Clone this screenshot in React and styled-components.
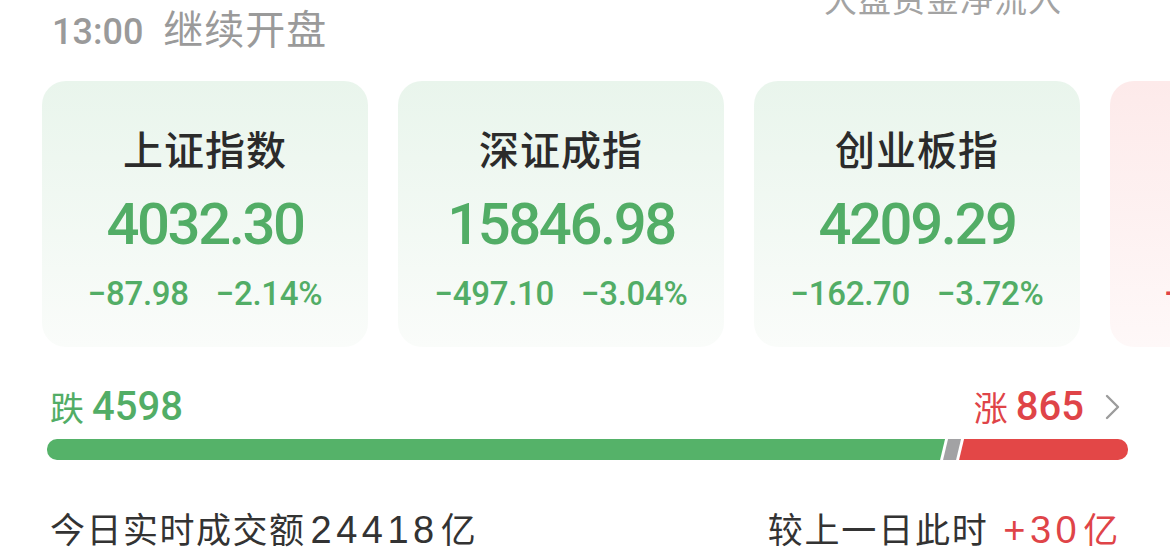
import React from 'react'
import styled, { createGlobalStyle } from 'styled-components'

const GlobalStyle = createGlobalStyle`
  html, body {
    margin: 0;
    padding: 0;
    background: #ffffff;
    overflow: hidden;
  }
  body {
    font-family: 'Noto Sans CJK SC', 'Noto Sans', sans-serif;
  }
`

const GREEN = '#52ad66'
const RED = '#df4448'

const indices = [
  { name: '上证指数', value: '4032.30', change: '-87.98', pct: '-2.14%', up: false },
  { name: '深证成指', value: '15846.98', change: '-497.10', pct: '-3.04%', up: false },
  { name: '创业板指', value: '4209.29', change: '-162.70', pct: '-3.72%', up: false },
  { name: '北证50', value: '1436.52', change: '+8.26', pct: '+1.29%', up: true },
]

// minus signs are drawn as a real minus so they line up with the plus
const sign = (s) => s.replace('-', '−')

function Chevron() {
  return (
    <svg width="18" height="26" viewBox="0 0 18 26" fill="none">
      <path d="M3 2 L14 13 L3 24" stroke="#9c9c9c" strokeWidth="2.4" strokeLinecap="round" strokeLinejoin="round" />
    </svg>
  )
}

function App() {
  const fall = 4598
  const rise = 865

  return (
    <Page>
      <GlobalStyle />
      <Header>
        <Status>
          <Clock>13:00</Clock>继续开盘
        </Status>
        <FlowTitle>大盘资金净流入</FlowTitle>
      </Header>

      <CardRow>
        {indices.map((item) => (
          <IndexCard key={item.name} $up={item.up}>
            <IndexName>{item.name}</IndexName>
            <IndexValue $up={item.up}>{item.value}</IndexValue>
            <IndexChange $up={item.up}>
              <span>{sign(item.change)}</span>
              <span>{sign(item.pct)}</span>
            </IndexChange>
          </IndexCard>
        ))}
      </CardRow>

      <Breadth>
        <BreadthLabels>
          <Count $color={GREEN}>
            <CountWord>跌</CountWord>
            <CountNum>{fall}</CountNum>
          </Count>
          <Count $color={RED}>
            <CountWord>涨</CountWord>
            <CountNum>{rise}</CountNum>
            <More><Chevron /></More>
          </Count>
        </BreadthLabels>
        <Bar>
          <FallPart style={{ flexGrow: fall }} />
          <FlatPart />
          <RisePart style={{ flexGrow: rise }} />
        </Bar>
      </Breadth>

      <Turnover>
        <TurnoverText>
          今日实时成交额<Digits>24418</Digits>亿
        </TurnoverText>
        <TurnoverText $wide>
          较上一日此时 <Delta><Digits>+30</Digits>亿</Delta>
        </TurnoverText>
      </Turnover>
    </Page>
  )
}

const Page = styled.div`
  width: 1170px;
  height: 553px;
  box-sizing: border-box;
  padding: 0 42px;
  overflow: hidden;
`

const Header = styled.div`
  height: 81px;
  display: flex;
  justify-content: space-between;
  align-items: flex-start;
`

const Status = styled.div`
  margin-left: 10px;
  line-height: 54px;
  font-size: 40px;
  color: #9a9a9a;
  letter-spacing: 1px;
  white-space: nowrap;
`

const Clock = styled.span`
  font-family: 'Roboto', sans-serif;
  font-weight: 500;
  font-size: 36px;
  letter-spacing: 0;
  margin-right: 20px;
`

const FlowTitle = styled.div`
  margin-top: -22px;
  margin-right: 66px;
  line-height: 40px;
  font-size: 33px;
  color: #a3a3a3;
  letter-spacing: 1px;
  white-space: nowrap;
`

const CardRow = styled.div`
  display: flex;
  gap: 30px;
`

const IndexCard = styled.div`
  flex: 0 0 326px;
  height: 266px;
  box-sizing: border-box;
  border-radius: 24px;
  padding-top: 42px;
  display: flex;
  flex-direction: column;
  align-items: center;
  white-space: nowrap;
  background: ${(p) =>
    p.$up
      ? 'linear-gradient(180deg, #fdeaea 0%, #fef8f8 100%)'
      : 'linear-gradient(180deg, #e9f5ec 0%, #fafcfa 100%)'};
`

const IndexName = styled.div`
  line-height: 50px;
  font-size: 40px;
  font-weight: 500;
  color: #2b2b2b;
  letter-spacing: 1px;
`

const IndexValue = styled.div`
  margin-top: 16px;
  line-height: 70px;
  font-family: 'Roboto', sans-serif;
  font-size: 58px;
  font-weight: 500;
  letter-spacing: -2.4px;
  color: ${(p) => (p.$up ? RED : GREEN)};
`

const IndexChange = styled.div`
  margin-top: 15px;
  line-height: 40px;
  display: flex;
  gap: 27px;
  font-family: 'Roboto', sans-serif;
  font-size: 33px;
  font-weight: 500;
  letter-spacing: -0.3px;
  color: ${(p) => (p.$up ? RED : GREEN)};
`

const Breadth = styled.div`
  margin-top: 38px;
  padding: 0 0 0 5px;
`

const BreadthLabels = styled.div`
  display: flex;
  justify-content: space-between;
  align-items: center;
  height: 44px;
  padding: 0 6px 0 3px;
`

const Count = styled.div`
  display: flex;
  align-items: center;
  color: ${(p) => p.$color};
`

const CountWord = styled.span`
  font-size: 34px;
  line-height: 44px;
  margin-right: 8px;
`

const CountNum = styled.span`
  font-family: 'Roboto', sans-serif;
  font-size: 40px;
  font-weight: 500;
  line-height: 44px;
`

const More = styled.span`
  display: flex;
  margin-left: 20px;
`

const Bar = styled.div`
  margin-top: 10px;
  height: 21px;
  display: flex;
`

const FallPart = styled.div`
  flex-basis: 0;
  background: #55b269;
  border-radius: 10px 0 0 10px;
  clip-path: polygon(0 0, 100% 0, calc(100% - 5px) 100%, 0 100%);
`

const FlatPart = styled.div`
  flex: 0 0 18px;
  margin: 0 -2px;
  background: #a2a2a4;
  clip-path: polygon(5px 0, 100% 0, calc(100% - 5px) 100%, 0 100%);
`

const RisePart = styled.div`
  flex-basis: 0;
  background: #e34747;
  border-radius: 0 10px 10px 0;
  clip-path: polygon(5px 0, 100% 0, 100% 100%, 0 100%);
`

const Turnover = styled.div`
  margin-top: 46px;
  display: flex;
  justify-content: space-between;
  align-items: baseline;
  padding: 0 8px 0 8px;
`

const TurnoverText = styled.div`
  font-size: 35px;
  line-height: 44px;
  color: #333333;
  white-space: nowrap;
  letter-spacing: ${(p) => (p.$wide ? '1.8px' : '1.5px')};
`

const Digits = styled.span`
  font-family: 'Liberation Sans', sans-serif;
  font-size: 38px;
  letter-spacing: 4.5px;
  margin: 0 2px 0 5px;
`

const Delta = styled.span`
  color: ${RED};
`

export default App
